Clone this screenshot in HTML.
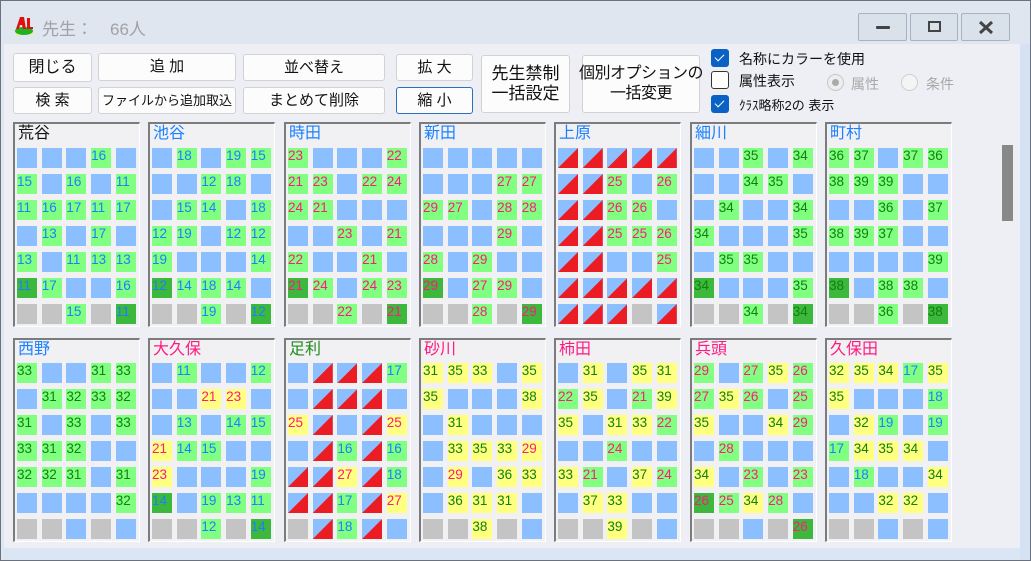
<!DOCTYPE html>
<html><head><meta charset="utf-8"><style>
*{margin:0;padding:0;box-sizing:border-box}
body{width:1031px;height:561px;overflow:hidden;position:relative;background:#dfe7f1;font-family:"Liberation Sans","Noto Sans CJK JP",sans-serif}
.win{position:absolute;left:0;top:0;width:1031px;height:561px;border:1px solid #6a7280;background:#dfe6f0}
.main{position:absolute;left:4px;top:44px;width:1016px;height:504px;background:#eeeff5}
.rs{position:absolute;left:1020px;top:44px;width:10px;height:516px;background:#d4e2f4}
.bs{position:absolute;left:4px;top:548px;width:1016px;height:12px;background:#dae6f4}
.btn{position:absolute;background:#fcfcfc;border:1px solid #d2d2d2;border-radius:3px;font-size:15px;color:#111;display:flex;align-items:center;justify-content:center;text-align:center;line-height:18px;white-space:nowrap}
.wb{position:absolute;top:13px;height:28px;border:1px solid #a8b2c0;background:#d9e1eb;border-radius:2px}
.cb{position:absolute;left:711px;width:18px;height:18px;border-radius:3px}
.on{background:#0a63c4}
.on:after{content:"";position:absolute;left:6px;top:3px;width:4px;height:8px;border:solid #fff;border-width:0 1.5px 1.5px 0;transform:rotate(45deg)}
.off{border:1px solid #333;background:#fff}
.lb{position:absolute;left:739px;font-size:14px;color:#111}
.p{position:absolute;width:127px;border-top:2px solid #7c7c7c;border-left:2px solid #7c7c7c;border-right:1px solid #fff;border-bottom:1px solid #fff;background:#f1f1f4}
.p .h{position:absolute;left:3px;top:0px;font-size:16px;line-height:20px}
.p .g_{position:absolute;left:2px;display:grid;grid-template-columns:repeat(5,20px);column-gap:4.7px;row-gap:6px}
.p i{display:block;position:relative;width:20px;height:20px;font-style:normal;font-size:13.5px;line-height:15px;overflow:hidden}
.u{background:#8cbfff}.g{background:#80ff80}.d{background:#3cb83c}.y{background:#ffff80}.x{background:#c4c4c4}
.t{background:#8cbfff}
.t:after{content:"";position:absolute;left:0;top:0;width:20px;height:20px;background:#ec1c24;clip-path:polygon(100% 0,100% 100%,0 100%)}
.B{color:#1a80ff}.R{color:#ff1a80}.K{color:#108010}
.r1{top:122px;height:205px}.r2{top:338px;height:204px}
.r1 .g_{top:24px}.r2 .g_{top:23px}
</style></head><body>
<div class="win"></div>
<div style="position:absolute;left:13px;top:14px;width:22px;height:23px">
<svg width="22" height="23" viewBox="0 0 22 23"><ellipse cx="11" cy="17" rx="9" ry="4" fill="#20b020"/><path d="M3 15 L7 3 L11 3 L13 15 L10 15 L9 11 L7 11 L6 15Z" fill="#e01010"/><path d="M14 4 L17 4 L17 13 L20 13 L20 15 L14 15Z" fill="#e01010"/><circle cx="19" cy="20" r="1" fill="#ff0"/><circle cx="4" cy="21" r="1" fill="#ff0"/></svg></div>
<div style="position:absolute;left:42px;top:15px;font-size:17px;color:#a2a2a6">先生：　66人</div>
<div class="wb" style="left:858px;width:49px"><div style="position:absolute;left:17px;top:12px;width:14px;height:3px;background:#444;border-radius:1px"></div></div>
<div class="wb" style="left:910px;width:48px"><div style="position:absolute;left:17px;top:7px;width:13px;height:11px;border:2px solid #444"></div></div>
<div class="wb" style="left:961px;width:49px"><svg style="position:absolute;left:16px;top:6px" width="16" height="15"><path d="M2 2L14 13M14 2L2 13" stroke="#444" stroke-width="3"/></svg></div>
<div class="main"></div><div class="rs"></div><div class="bs"></div>
<div class="btn" style="left:13px;top:53px;width:79px;height:29px;font-size:16px">閉じる</div>
<div class="btn" style="left:98px;top:53px;width:138px;height:28px">追 加</div>
<div class="btn" style="left:243px;top:54px;width:142px;height:27px">並べ替え</div>
<div class="btn" style="left:396px;top:54px;width:77px;height:27px">拡 大</div>
<div class="btn" style="left:13px;top:87px;width:79px;height:27px">検 索</div>
<div class="btn" style="left:98px;top:87px;width:138px;height:27px;font-size:13px">ファイルから追加取込</div>
<div class="btn" style="left:243px;top:87px;width:142px;height:27px">まとめて削除</div>
<div class="btn" style="left:396px;top:87px;width:77px;height:27px;border-color:#2a6fc0">縮 小</div>
<div class="btn" style="left:481px;top:55px;width:89px;height:58px;font-size:17px;line-height:20px">先生禁制<br>一括設定</div>
<div class="btn" style="left:582px;top:55px;width:118px;height:58px;font-size:16px;line-height:20px;letter-spacing:-0.5px">個別オプションの<br>一括変更</div>
<div class="cb on" style="top:49px"></div><div class="lb" style="top:49px">名称にカラーを使用</div>
<div class="cb off" style="top:71px"></div><div class="lb" style="top:71px">属性表示</div>
<div class="cb on" style="top:95px"></div><div class="lb" style="top:95px;font-size:13px">ｸﾗｽ略称2の 表示</div>
<div style="position:absolute;left:827px;top:74px;width:17px;height:17px;border-radius:50%;border:1px solid #c8c8c8;background:#eee"><div style="margin:4px;width:7px;height:7px;border-radius:50%;background:#aaa"></div></div>
<div style="position:absolute;left:851px;top:74px;font-size:14px;color:#a8a8a8">属性</div>
<div style="position:absolute;left:901px;top:74px;width:17px;height:17px;border-radius:50%;border:1px solid #d0d0d0;background:#f4f4f4"></div>
<div style="position:absolute;left:926px;top:74px;font-size:14px;color:#a8a8a8">条件</div>
<div style="position:absolute;left:1002px;top:145px;width:11px;height:76px;background:#888"></div>

<!-- row 1 -->
<div class="p r1 B" style="left:13px"><div class="h" style="color:#111">荒谷</div><div class="g_">
<i class="u"></i><i class="u"></i><i class="u"></i><i class="g">16</i><i class="u"></i>
<i class="g">15</i><i class="u"></i><i class="g">16</i><i class="u"></i><i class="g">11</i>
<i class="g">11</i><i class="g">16</i><i class="g">17</i><i class="g">11</i><i class="g">17</i>
<i class="u"></i><i class="g">13</i><i class="u"></i><i class="g">17</i><i class="u"></i>
<i class="g">13</i><i class="u"></i><i class="g">11</i><i class="g">13</i><i class="g">13</i>
<i class="d">11</i><i class="g">17</i><i class="u"></i><i class="u"></i><i class="g">16</i>
<i class="x"></i><i class="x"></i><i class="g">15</i><i class="x"></i><i class="d">11</i>
</div></div>
<div class="p r1 B" style="left:148px"><div class="h">池谷</div><div class="g_">
<i class="u"></i><i class="g">18</i><i class="u"></i><i class="g">19</i><i class="g">15</i>
<i class="u"></i><i class="u"></i><i class="g">12</i><i class="g">18</i><i class="u"></i>
<i class="u"></i><i class="g">15</i><i class="g">14</i><i class="u"></i><i class="g">18</i>
<i class="g">12</i><i class="g">19</i><i class="u"></i><i class="g">12</i><i class="g">12</i>
<i class="g">19</i><i class="u"></i><i class="u"></i><i class="u"></i><i class="g">14</i>
<i class="d">12</i><i class="g">14</i><i class="g">18</i><i class="g">14</i><i class="u"></i>
<i class="x"></i><i class="x"></i><i class="g">19</i><i class="x"></i><i class="d">12</i>
</div></div>
<div class="p r1 R" style="left:284px"><div class="h B">時田</div><div class="g_">
<i class="g">23</i><i class="u"></i><i class="u"></i><i class="u"></i><i class="g">22</i>
<i class="g">21</i><i class="g">23</i><i class="u"></i><i class="g">22</i><i class="g">24</i>
<i class="g">24</i><i class="g">21</i><i class="u"></i><i class="u"></i><i class="u"></i>
<i class="u"></i><i class="u"></i><i class="g">23</i><i class="u"></i><i class="g">21</i>
<i class="g">22</i><i class="u"></i><i class="u"></i><i class="g">21</i><i class="u"></i>
<i class="d">21</i><i class="g">24</i><i class="u"></i><i class="g">24</i><i class="g">23</i>
<i class="x"></i><i class="x"></i><i class="g">22</i><i class="x"></i><i class="d">21</i>
</div></div>
<div class="p r1 R" style="left:419px"><div class="h B">新田</div><div class="g_">
<i class="u"></i><i class="u"></i><i class="u"></i><i class="u"></i><i class="u"></i>
<i class="u"></i><i class="u"></i><i class="u"></i><i class="g">27</i><i class="g">27</i>
<i class="g">29</i><i class="g">27</i><i class="u"></i><i class="g">28</i><i class="g">28</i>
<i class="u"></i><i class="u"></i><i class="u"></i><i class="g">29</i><i class="u"></i>
<i class="g">28</i><i class="u"></i><i class="g">29</i><i class="u"></i><i class="u"></i>
<i class="d">29</i><i class="u"></i><i class="g">27</i><i class="g">29</i><i class="u"></i>
<i class="x"></i><i class="x"></i><i class="g">28</i><i class="x"></i><i class="d">29</i>
</div></div>
<div class="p r1 R" style="left:554px"><div class="h B">上原</div><div class="g_">
<i class="t"></i><i class="t"></i><i class="t"></i><i class="t"></i><i class="t"></i>
<i class="t"></i><i class="t"></i><i class="g">25</i><i class="u"></i><i class="g">26</i>
<i class="t"></i><i class="t"></i><i class="g">26</i><i class="g">26</i><i class="u"></i>
<i class="t"></i><i class="t"></i><i class="g">25</i><i class="g">25</i><i class="g">26</i>
<i class="t"></i><i class="t"></i><i class="u"></i><i class="u"></i><i class="g">25</i>
<i class="t"></i><i class="t"></i><i class="t"></i><i class="t"></i><i class="t"></i>
<i class="t"></i><i class="t"></i><i class="t"></i><i class="x"></i><i class="t"></i>
</div></div>
<div class="p r1 K" style="left:690px"><div class="h B">細川</div><div class="g_">
<i class="u"></i><i class="u"></i><i class="g">35</i><i class="u"></i><i class="g">34</i>
<i class="u"></i><i class="u"></i><i class="g">34</i><i class="g">35</i><i class="u"></i>
<i class="u"></i><i class="g">34</i><i class="u"></i><i class="u"></i><i class="g">34</i>
<i class="g">34</i><i class="u"></i><i class="u"></i><i class="u"></i><i class="g">35</i>
<i class="u"></i><i class="g">35</i><i class="g">35</i><i class="u"></i><i class="u"></i>
<i class="d">34</i><i class="u"></i><i class="u"></i><i class="u"></i><i class="g">35</i>
<i class="x"></i><i class="x"></i><i class="g">34</i><i class="x"></i><i class="d">34</i>
</div></div>
<div class="p r1 K" style="left:825px"><div class="h B">町村</div><div class="g_">
<i class="g">36</i><i class="g">37</i><i class="u"></i><i class="g">37</i><i class="g">36</i>
<i class="g">38</i><i class="g">39</i><i class="g">39</i><i class="u"></i><i class="u"></i>
<i class="u"></i><i class="u"></i><i class="g">36</i><i class="u"></i><i class="g">37</i>
<i class="g">38</i><i class="g">39</i><i class="g">37</i><i class="u"></i><i class="u"></i>
<i class="u"></i><i class="u"></i><i class="u"></i><i class="u"></i><i class="g">39</i>
<i class="d">38</i><i class="u"></i><i class="g">38</i><i class="g">38</i><i class="u"></i>
<i class="x"></i><i class="x"></i><i class="g">36</i><i class="x"></i><i class="d">38</i>
</div></div>

<!-- row 2 -->
<div class="p r2 K" style="left:13px"><div class="h B">西野</div><div class="g_">
<i class="g">33</i><i class="u"></i><i class="u"></i><i class="g">31</i><i class="g">33</i>
<i class="u"></i><i class="g">31</i><i class="g">32</i><i class="g">33</i><i class="g">32</i>
<i class="g">31</i><i class="u"></i><i class="g">33</i><i class="u"></i><i class="g">33</i>
<i class="g">33</i><i class="g">31</i><i class="g">32</i><i class="u"></i><i class="u"></i>
<i class="g">32</i><i class="g">32</i><i class="g">31</i><i class="u"></i><i class="g">31</i>
<i class="u"></i><i class="u"></i><i class="u"></i><i class="u"></i><i class="g">32</i>
<i class="x"></i><i class="x"></i><i class="u"></i><i class="x"></i><i class="u"></i>
</div></div>
<div class="p r2 B" style="left:148px"><div class="h R">大久保</div><div class="g_">
<i class="u"></i><i class="g">11</i><i class="u"></i><i class="u"></i><i class="g">12</i>
<i class="u"></i><i class="u"></i><i class="y R">21</i><i class="y R">23</i><i class="u"></i>
<i class="u"></i><i class="g">13</i><i class="u"></i><i class="g">14</i><i class="g">15</i>
<i class="y R">21</i><i class="g">14</i><i class="g">15</i><i class="u"></i><i class="u"></i>
<i class="y R">23</i><i class="u"></i><i class="u"></i><i class="u"></i><i class="g">19</i>
<i class="d">14</i><i class="u"></i><i class="g">19</i><i class="g">13</i><i class="g">11</i>
<i class="x"></i><i class="x"></i><i class="g">12</i><i class="x"></i><i class="d">14</i>
</div></div>
<div class="p r2 B" style="left:284px"><div class="h" style="color:#1f8a1f">足利</div><div class="g_">
<i class="u"></i><i class="t"></i><i class="t"></i><i class="t"></i><i class="g">17</i>
<i class="u"></i><i class="t"></i><i class="t"></i><i class="t"></i><i class="u"></i>
<i class="y R">25</i><i class="t"></i><i class="u"></i><i class="t"></i><i class="y R">25</i>
<i class="u"></i><i class="t"></i><i class="g">16</i><i class="t"></i><i class="g">16</i>
<i class="t"></i><i class="t"></i><i class="y R">27</i><i class="t"></i><i class="g">18</i>
<i class="t"></i><i class="t"></i><i class="g">17</i><i class="t"></i><i class="y R">27</i>
<i class="x"></i><i class="t"></i><i class="g">18</i><i class="t"></i><i class="u"></i>
</div></div>
<div class="p r2 K" style="left:419px"><div class="h R">砂川</div><div class="g_">
<i class="y">31</i><i class="y">35</i><i class="y">33</i><i class="u"></i><i class="y">35</i>
<i class="y">35</i><i class="u"></i><i class="u"></i><i class="u"></i><i class="y">38</i>
<i class="u"></i><i class="y">31</i><i class="u"></i><i class="u"></i><i class="u"></i>
<i class="u"></i><i class="y">33</i><i class="y">35</i><i class="y">33</i><i class="y R">29</i>
<i class="u"></i><i class="y R">29</i><i class="u"></i><i class="y">36</i><i class="y">33</i>
<i class="u"></i><i class="y">36</i><i class="y">31</i><i class="y">31</i><i class="u"></i>
<i class="x"></i><i class="x"></i><i class="y">38</i><i class="x"></i><i class="u"></i>
</div></div>
<div class="p r2 K" style="left:554px"><div class="h R">柿田</div><div class="g_">
<i class="u"></i><i class="y">31</i><i class="u"></i><i class="y">35</i><i class="y">31</i>
<i class="g R">22</i><i class="y">35</i><i class="u"></i><i class="g R">21</i><i class="y">39</i>
<i class="y">35</i><i class="u"></i><i class="y">31</i><i class="y">33</i><i class="g R">22</i>
<i class="u"></i><i class="u"></i><i class="g R">24</i><i class="u"></i><i class="u"></i>
<i class="y">33</i><i class="g R">21</i><i class="u"></i><i class="y">37</i><i class="g R">24</i>
<i class="u"></i><i class="y">37</i><i class="y">33</i><i class="u"></i><i class="u"></i>
<i class="x"></i><i class="x"></i><i class="y">39</i><i class="x"></i><i class="u"></i>
</div></div>
<div class="p r2 R" style="left:690px"><div class="h">兵頭</div><div class="g_">
<i class="g">29</i><i class="u"></i><i class="g">27</i><i class="y K">35</i><i class="g">26</i>
<i class="g">27</i><i class="y K">35</i><i class="g">26</i><i class="u"></i><i class="g">25</i>
<i class="y K">35</i><i class="u"></i><i class="u"></i><i class="y K">34</i><i class="g">29</i>
<i class="u"></i><i class="g">28</i><i class="u"></i><i class="u"></i><i class="u"></i>
<i class="y K">34</i><i class="u"></i><i class="g">23</i><i class="u"></i><i class="g">23</i>
<i class="d">26</i><i class="g">25</i><i class="y K">34</i><i class="g">28</i><i class="u"></i>
<i class="x"></i><i class="x"></i><i class="u"></i><i class="x"></i><i class="d">26</i>
</div></div>
<div class="p r2 K" style="left:825px"><div class="h R">久保田</div><div class="g_">
<i class="y">32</i><i class="y">35</i><i class="y">34</i><i class="g B">17</i><i class="y">35</i>
<i class="y">35</i><i class="u"></i><i class="u"></i><i class="u"></i><i class="g B">18</i>
<i class="u"></i><i class="y">32</i><i class="g B">19</i><i class="u"></i><i class="g B">19</i>
<i class="g B">17</i><i class="y">34</i><i class="y">35</i><i class="y">34</i><i class="u"></i>
<i class="u"></i><i class="g B">18</i><i class="u"></i><i class="u"></i><i class="y">34</i>
<i class="u"></i><i class="u"></i><i class="y">32</i><i class="y">32</i><i class="u"></i>
<i class="x"></i><i class="x"></i><i class="u"></i><i class="x"></i><i class="u"></i>
</div></div>
</body></html>
